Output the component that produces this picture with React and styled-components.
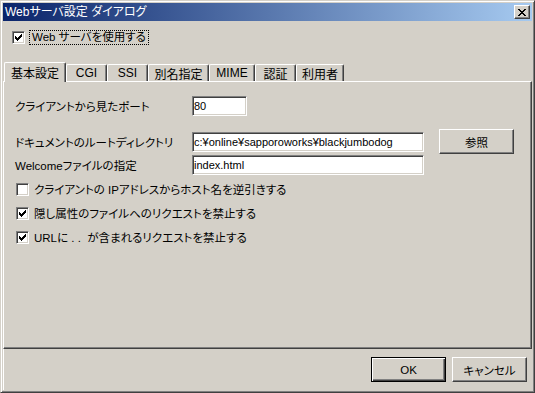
import styled, { createGlobalStyle } from "styled-components";

const GlobalStyle = createGlobalStyle`
  html, body {
    margin: 0;
    padding: 0;
    background: #d4d0c8;
  }
  body {
    font-family: "Liberation Sans", "Noto Sans CJK JP", sans-serif;
    font-size: 11.5px;
    font-feature-settings: "palt";
    color: #000;
  }
`;

const tabs = [
  { label: "基本設定", width: 62, active: true },
  { label: "CGI", width: 41 },
  { label: "SSI", width: 41 },
  { label: "別名指定", width: 61 },
  { label: "MIME", width: 46 },
  { label: "認証", width: 41 },
  { label: "利用者", width: 48 },
];

const options = [
  { label: "クライアントの IPアドレスからホスト名を逆引きする", checked: false },
  { label: "隠し属性のファイルへのリクエストを禁止する", checked: true },
  { label: "URLに . .  が含まれるリクエストを禁止する", checked: true },
];

const CheckMark = () => (
  <svg width="7" height="7" viewBox="0 0 7 7" shapeRendering="crispEdges">
    <path
      fill="#000"
      d="M0 2h1v3H0z M1 3h1v3H1z M2 4h1v3H2z M3 3h1v3H3z M4 2h1v3H4z M5 1h1v3H5z M6 0h1v3H6z"
    />
  </svg>
);

const CloseGlyph = () => (
  <svg width="8" height="7" viewBox="0 0 8 7" shapeRendering="crispEdges">
    <path
      fill="#000"
      d="M0 0h2v1H0z M6 0h2v1H6z M1 1h2v1H1z M5 1h2v1H5z M2 2h4v1H2z M3 3h2v1H3z M2 4h4v1H2z M1 5h2v1H1z M5 5h2v1H5z M0 6h2v1H0z M6 6h2v1H6z"
    />
  </svg>
);

const Check = ({ checked }) => <Box>{checked && <CheckMark />}</Box>;

const App = () => {
  return (
    <>
      <GlobalStyle />
      <Window>
        <TitleBar>
          <TitleText>Webサーバ設定 ダイアログ</TitleText>
          <CloseButton>
            <CloseGlyph />
          </CloseButton>
        </TitleBar>

        <TopRow>
          <Check checked />
          <FocusLabel>Web サーバを使用する</FocusLabel>
        </TopRow>

        <TabStrip>
          {tabs.map((tab) => (
            <Tab key={tab.label} $width={tab.width} $active={tab.active}>
              {tab.label}
            </Tab>
          ))}
        </TabStrip>

        <TabPanel>
          <FieldRow $top={0} $height={20}>
            <FieldLabel>クライアントから見たポート</FieldLabel>
            <TextBox $width={55} readOnly value="80" />
          </FieldRow>
          <FieldRow $top={13} $height={25}>
            <FieldLabel>ドキュメントのルートディレクトリ</FieldLabel>
            <TextBox
              $width={232}
              readOnly
              value="c:¥online¥sapporoworks¥blackjumbodog"
            />
            <BrowseButton>参照</BrowseButton>
          </FieldRow>
          <FieldRow $top={1} $height={20}>
            <FieldLabel>Welcomeファイルの指定</FieldLabel>
            <TextBox $width={232} readOnly value="index.html" />
          </FieldRow>

          <CheckList>
            {options.map((opt) => (
              <CheckRow key={opt.label}>
                <Check checked={opt.checked} />
                <OptionText>{opt.label}</OptionText>
              </CheckRow>
            ))}
          </CheckList>
        </TabPanel>

        <ButtonBar>
          <PushButton $default>OK</PushButton>
          <PushButton>キャンセル</PushButton>
        </ButtonBar>
      </Window>
    </>
  );
};

export default App;

const Window = styled.div`
  width: 535px;
  height: 393px;
  box-sizing: border-box;
  display: flex;
  flex-direction: column;
  padding: 2px;
  border: 1px solid;
  border-color: #d4d0c8 #404040 #404040 #d4d0c8;
  box-shadow: inset 1px 1px #fff, inset -1px -1px #808080;
  background: #d4d0c8;
`;

const TitleBar = styled.div`
  height: 18px;
  flex: none;
  display: flex;
  align-items: center;
  padding: 0 2px;
  background: linear-gradient(to right, #0a246a, #a6caf0);
  color: #fff;
`;

const TitleText = styled.span`
  line-height: 18px;
  font-size: 12px;
`;

const CloseButton = styled.div`
  margin-left: auto;
  width: 16px;
  height: 14px;
  box-sizing: border-box;
  display: flex;
  align-items: center;
  justify-content: center;
  background: #d4d0c8;
  border: 1px solid;
  border-color: #fff #404040 #404040 #fff;
  box-shadow: inset -1px -1px #808080;
`;

const TopRow = styled.div`
  flex: none;
  height: 15px;
  display: flex;
  align-items: center;
  gap: 4px;
  margin-top: 9px;
  padding-left: 9px;
`;

const Box = styled.span`
  width: 13px;
  height: 13px;
  flex: none;
  box-sizing: border-box;
  display: flex;
  align-items: center;
  justify-content: center;
  background: #fff;
  border: 1px solid;
  border-color: #808080 #fff #fff #808080;
  box-shadow: inset 1px 1px #404040, inset -1px -1px #d4d0c8;
`;

const FocusLabel = styled.span`
  border: 1px dotted #000;
  line-height: 13px;
  padding: 0 2px;
`;

const TabStrip = styled.div`
  flex: none;
  position: relative;
  z-index: 1;
  display: flex;
  align-items: flex-end;
  height: 19px;
  margin-top: 17px;
  padding-left: 1px;
`;

const Tab = styled.div`
  width: ${(p) => p.$width}px;
  height: ${(p) => (p.$active ? 20 : 17)}px;
  margin-bottom: ${(p) => (p.$active ? -1 : 0)}px;
  box-sizing: border-box;
  display: flex;
  align-items: center;
  justify-content: center;
  font-size: 12px;
  background: #d4d0c8;
  border-top: 1px solid #fff;
  border-left: 1px solid #fff;
  border-right: 1px solid #404040;
  border-radius: 2px 2px 0 0;
  box-shadow: inset -1px 0 #808080;
`;

const TabPanel = styled.div`
  flex: 1;
  display: flex;
  flex-direction: column;
  padding: 14px 0 0 11px;
  border: 1px solid;
  border-color: #fff #404040 #404040 #fff;
  box-shadow: inset -1px -1px #808080;
`;

const FieldRow = styled.div`
  display: flex;
  align-items: center;
  height: ${(p) => p.$height}px;
  margin-top: ${(p) => p.$top}px;
`;

const FieldLabel = styled.span`
  width: 177px;
  flex: none;
`;

const TextBox = styled.input`
  width: ${(p) => p.$width}px;
  height: 20px;
  box-sizing: border-box;
  margin: 0;
  padding: 0 1px;
  font: inherit;
  font-size: 11px;
  color: #000;
  background: #fff;
  outline: none;
  border: 1px solid;
  border-color: #808080 #fff #fff #808080;
  box-shadow: inset 1px 1px #404040, inset -1px -1px #d4d0c8;
`;

const raised = `
  box-sizing: border-box;
  display: flex;
  align-items: center;
  justify-content: center;
  background: #d4d0c8;
  border: 1px solid;
  border-color: #fff #404040 #404040 #fff;
  box-shadow: inset -1px -1px #808080;
`;

const BrowseButton = styled.div`
  ${raised}
  width: 75px;
  height: 25px;
  margin-left: 15px;
`;

const CheckList = styled.div`
  display: flex;
  flex-direction: column;
  margin-top: 2px;
  padding-left: 1px;
`;

const CheckRow = styled.div`
  height: 24px;
  display: flex;
  align-items: center;
  gap: 5px;
`;

const OptionText = styled.span`
  white-space: pre;
`;

const ButtonBar = styled.div`
  flex: none;
  height: 41px;
  box-sizing: border-box;
  display: flex;
  justify-content: flex-end;
  align-items: flex-start;
  gap: 6px;
  padding: 8px 5px 0 0;
  border-left: 1px solid #fff;
`;

const PushButton = styled.div`
  ${raised}
  width: 75px;
  height: 25px;
  ${(p) =>
    p.$default &&
    `
    border-color: #000;
    box-shadow: inset 1px 1px #fff, inset -1px -1px #404040, inset -2px -2px #808080;
  `}
`;
